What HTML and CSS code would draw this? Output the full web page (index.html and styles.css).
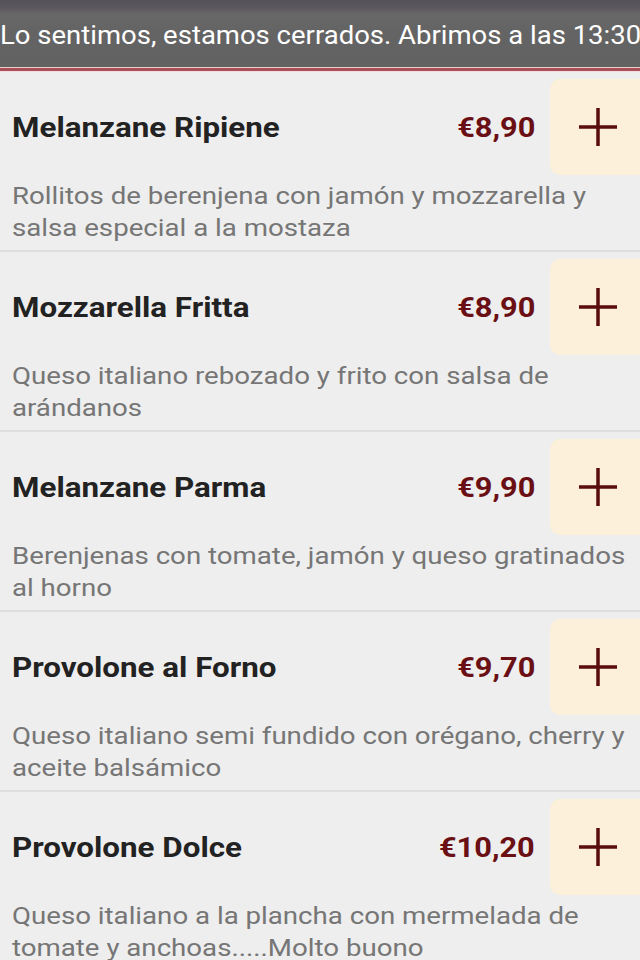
FILE: index.html
```html
<!DOCTYPE html>
<html lang="es">
<head>
<meta charset="utf-8">
<link rel="stylesheet" href="styles.css">
</head>
<body>
<header class="closed-bar">
  <div class="closed-text">Lo sentimos, estamos cerrados. Abrimos a las 13:30</div>
</header>
<div class="bar-line"></div>
<main class="menu">
  <article class="item">
    <div class="item-row">
      <div class="item-name-wrap"><h2 class="item-name">Melanzane Ripiene</h2></div>
      <span class="item-price">€8,90</span>
      <button class="add-btn" aria-label="Añadir"><svg viewBox="0 0 40 40" width="40" height="40"><path d="M20 1V39M1 20H39" stroke="#5a0b0b" stroke-width="3.5" fill="none"/></svg></button>
    </div>
    <p class="item-desc">Rollitos de berenjena con jamón y mozzarella y salsa especial a la mostaza</p>
  </article>
  <article class="item">
    <div class="item-row">
      <div class="item-name-wrap"><h2 class="item-name">Mozzarella Fritta</h2></div>
      <span class="item-price">€8,90</span>
      <button class="add-btn" aria-label="Añadir"><svg viewBox="0 0 40 40" width="40" height="40"><path d="M20 1V39M1 20H39" stroke="#5a0b0b" stroke-width="3.5" fill="none"/></svg></button>
    </div>
    <p class="item-desc">Queso italiano rebozado y frito con salsa de arándanos</p>
  </article>
  <article class="item">
    <div class="item-row">
      <div class="item-name-wrap"><h2 class="item-name">Melanzane Parma</h2></div>
      <span class="item-price">€9,90</span>
      <button class="add-btn" aria-label="Añadir"><svg viewBox="0 0 40 40" width="40" height="40"><path d="M20 1V39M1 20H39" stroke="#5a0b0b" stroke-width="3.5" fill="none"/></svg></button>
    </div>
    <p class="item-desc">Berenjenas con tomate, jamón y queso gratinados al horno</p>
  </article>
  <article class="item">
    <div class="item-row">
      <div class="item-name-wrap"><h2 class="item-name">Provolone al Forno</h2></div>
      <span class="item-price">€9,70</span>
      <button class="add-btn" aria-label="Añadir"><svg viewBox="0 0 40 40" width="40" height="40"><path d="M20 1V39M1 20H39" stroke="#5a0b0b" stroke-width="3.5" fill="none"/></svg></button>
    </div>
    <p class="item-desc">Queso italiano semi fundido con orégano, cherry y aceite balsámico</p>
  </article>
  <article class="item">
    <div class="item-row">
      <div class="item-name-wrap"><h2 class="item-name">Provolone Dolce</h2></div>
      <span class="item-price">€10,20</span>
      <button class="add-btn" aria-label="Añadir"><svg viewBox="0 0 40 40" width="40" height="40"><path d="M20 1V39M1 20H39" stroke="#5a0b0b" stroke-width="3.5" fill="none"/></svg></button>
    </div>
    <p class="item-desc">Queso italiano a la plancha con mermelada de tomate y anchoas.....Molto buono</p>
  </article>
</main>
</body>
</html>
```
FILE: styles.css
```css
* { box-sizing: border-box; }
html, body {
  margin: 0;
  padding: 0;
  background: #eeeeee;
  font-family: Roboto, "Liberation Sans", sans-serif;
  overflow: hidden;
}
.closed-bar {
  height: 67px;
  padding-top: 3px;
  background: linear-gradient(#56525a 0px, #5c585e 8px, #696868 14px, #646464 30px, #626262 67px);
  display: flex;
  align-items: center;
  overflow: hidden;
}
.closed-text {
  color: #ffffff;
  font-size: 25.5px;
  white-space: nowrap;
  transform: scaleX(1.078);
  transform-origin: left center;
}
.bar-line {
  height: 5px;
  background: linear-gradient(#e9d2c8 0px, #e9d2c8 1px, #a8505a 1px, #a8505a 4px, #f2dcdc 4px);
}
.menu {
  display: flex;
  flex-direction: column;
}
.item {
  padding-top: 7px;
  padding-bottom: 6px;
  border-bottom: 2px solid #dedede;
}
.item-row {
  display: flex;
  align-items: center;
  height: 96px;
}
.item-name-wrap {
  flex: 1;
  padding-left: 12px;
}
.item-name {
  margin: 0;
  font-size: 28.5px;
  font-weight: 700;
  color: #222222;
  white-space: nowrap;
  transform: scaleX(1.1);
  transform-origin: left center;
}
.item-price {
  font-size: 28.5px;
  font-weight: 700;
  color: #6a0f14;
  margin-right: 15px;
  transform: scaleX(1.08);
  transform-origin: right center;
}
.add-btn {
  width: 90px;
  height: 96px;
  border: none;
  padding: 0 0 0 6px;
  background: #fcf0da;
  border-radius: 10px 0 0 10px;
  display: flex;
  align-items: center;
  justify-content: center;
}
.add-btn svg { display: block; }
.item-desc {
  margin: 5px 0 0 12px;
  padding: 0;
  width: 542px;
  height: 64px;
  font-size: 24px;
  line-height: 32px;
  color: #767676;
  transform: scaleX(1.152);
  transform-origin: left top;
}
```
